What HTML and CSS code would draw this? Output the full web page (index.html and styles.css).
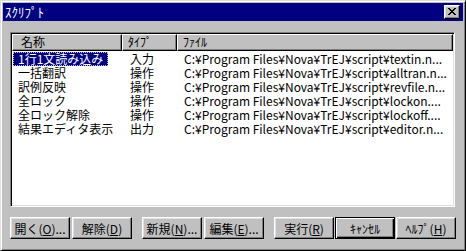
FILE: index.html
```html
<!DOCTYPE html>
<html lang="ja">
<head>
  <meta charset="UTF-8">
  <title>ｽｸﾘﾌﾟﾄ</title>
  <link rel="stylesheet" href="styles.css">
</head>
<body>
  <div class="dialog">
    <div class="titlebar">
      <span class="title">ｽｸﾘﾌﾟﾄ</span>
      <button class="close-btn" type="button">
        <svg width="8" height="7" viewBox="0 0 8 7" shape-rendering="crispEdges">
          <path fill="#000" d="M0 0h2v1H0zM6 0h2v1H6zM1 1h2v1H1zM5 1h2v1H5zM2 2h4v1H2zM3 3h2v1H3zM2 4h4v1H2zM1 5h2v1H1zM5 5h2v1H5zM0 6h2v1H0zM6 6h2v1H6z"/>
        </svg>
      </button>
    </div>
    <div class="content">
      <div class="list">
        <div class="list-head">
          <div class="head-cell name">名称</div>
          <div class="head-cell type">ﾀｲﾌﾟ</div>
          <div class="head-cell file">ﾌｧｲﾙ</div>
        </div>
        <div class="list-row">
          <div class="cell name"><span class="label selected">1行1文読み込み</span></div>
          <div class="cell type">入力</div>
          <div class="cell file">C:¥Program Files¥Nova¥TrEJ¥script¥textin.n...</div>
        </div>
        <div class="list-row">
          <div class="cell name"><span class="label">一括翻訳</span></div>
          <div class="cell type">操作</div>
          <div class="cell file">C:¥Program Files¥Nova¥TrEJ¥script¥alltran.n...</div>
        </div>
        <div class="list-row">
          <div class="cell name"><span class="label">訳例反映</span></div>
          <div class="cell type">操作</div>
          <div class="cell file">C:¥Program Files¥Nova¥TrEJ¥script¥revfile.n...</div>
        </div>
        <div class="list-row">
          <div class="cell name"><span class="label">全ロック</span></div>
          <div class="cell type">操作</div>
          <div class="cell file">C:¥Program Files¥Nova¥TrEJ¥script¥lockon....</div>
        </div>
        <div class="list-row">
          <div class="cell name"><span class="label">全ロック解除</span></div>
          <div class="cell type">操作</div>
          <div class="cell file">C:¥Program Files¥Nova¥TrEJ¥script¥lockoff....</div>
        </div>
        <div class="list-row">
          <div class="cell name"><span class="label">結果エディタ表示</span></div>
          <div class="cell type">出力</div>
          <div class="cell file">C:¥Program Files¥Nova¥TrEJ¥script¥editor.n...</div>
        </div>
      </div>
      <div class="buttons">
        <div class="btn-group">
          <button class="btn" type="button">開く(<u>O</u>)...</button>
          <button class="btn" type="button">解除(<u>D</u>)</button>
        </div>
        <div class="btn-group">
          <button class="btn" type="button">新規(<u>N</u>)...</button>
          <button class="btn" type="button">編集(<u>E</u>)...</button>
        </div>
        <div class="btn-group tight">
          <button class="btn" type="button">実行(<u>R</u>)</button>
          <button class="btn default" type="button">ｷｬﾝｾﾙ</button>
          <button class="btn" type="button">ﾍﾙﾌﾟ(<u>H</u>)</button>
        </div>
      </div>
    </div>
  </div>
</body>
</html>
```

FILE: styles.css
```css
body {
  margin: 0;
  padding: 0;
  background: #c0c0c0;
  font-family: "Noto Sans CJK JP", "Liberation Sans", sans-serif;
  font-size: 12px;
  color: #000;
}
.dialog {
  width: 466px;
  height: 251px;
  box-sizing: border-box;
  background: #c0c0c0;
  border: 1px solid;
  border-color: #dfdfdf #000 #000 #dfdfdf;
  box-shadow: inset 1px 1px #fff, inset -1px -1px #808080;
  padding: 2px;
  display: flex;
  flex-direction: column;
}
.titlebar {
  height: 18px;
  background: #000080;
  color: #fff;
  display: flex;
  align-items: center;
  justify-content: space-between;
  padding: 0 3px 0 2px;
}
.title {
  line-height: 18px;
  font-size: 13px;
}
.close-btn {
  width: 16px;
  height: 14px;
  padding: 0;
  box-sizing: border-box;
  background: #c0c0c0;
  border: 1px solid;
  border-color: #fff #000 #000 #fff;
  box-shadow: inset -1px -1px #808080, inset 1px 1px #dfdfdf;
  display: flex;
  align-items: center;
  justify-content: center;
}
.close-btn svg {
  display: block;
  margin: 0 0 1px 0;
}
.content {
  padding: 11px 8px 0 7px;
  display: flex;
  flex-direction: column;
}
.list {
  height: 175px;
  box-sizing: border-box;
  background: #fff;
  border: 1px solid;
  border-color: #808080 #fff #fff #808080;
  box-shadow: inset 1px 1px #000, inset -1px -1px #dfdfdf;
  padding: 1px;
}
.list-head,
.list-row {
  display: grid;
  grid-template-columns: 110px 55px 1fr;
}
.head-cell {
  height: 17px;
  box-sizing: border-box;
  background: #c0c0c0;
  border: 1px solid;
  border-color: #fff #000 #000 #fff;
  box-shadow: inset -1px -1px #808080;
  line-height: 14px;
  white-space: nowrap;
}
.head-cell.name {
  padding-left: 8px;
}
.head-cell.type,
.head-cell.file {
  padding-left: 5px;
}
.list-row {
  height: 14px;
  line-height: 14px;
}
.list-head + .list-row {
  margin-top: 1px;
}
.cell {
  white-space: nowrap;
}
.cell.name {
  padding-left: 1px;
}
.cell.type {
  padding-left: 8px;
}
.cell.file {
  padding-left: 7px;
}
.label {
  display: inline-block;
  padding: 0 5px;
  height: 14px;
  box-sizing: border-box;
}
.label.selected {
  background: #000080;
  color: #fff;
  outline: 1px dotted #c0c0c0;
  outline-offset: -1px;
}
.buttons {
  display: flex;
  gap: 10px;
  margin-top: 10px;
}
.btn-group {
  display: flex;
  gap: 2px;
}
.btn-group.tight {
  gap: 1px;
}
.btn {
  width: 60px;
  height: 22px;
  box-sizing: border-box;
  padding: 0;
  background: #c0c0c0;
  font-family: "Noto Sans CJK JP", "Liberation Sans", sans-serif;
  font-size: 12px;
  color: #000;
  border: 1px solid;
  border-color: #fff #000 #000 #fff;
  box-shadow: inset -1px -1px #808080, inset 1px 1px #dfdfdf;
  white-space: nowrap;
}
.btn.default {
  border-color: #000;
  box-shadow: inset 1px 1px #fff, inset -1px -1px #000, inset -2px -2px #808080;
}
.btn u {
  text-underline-offset: 1px;
}
```
